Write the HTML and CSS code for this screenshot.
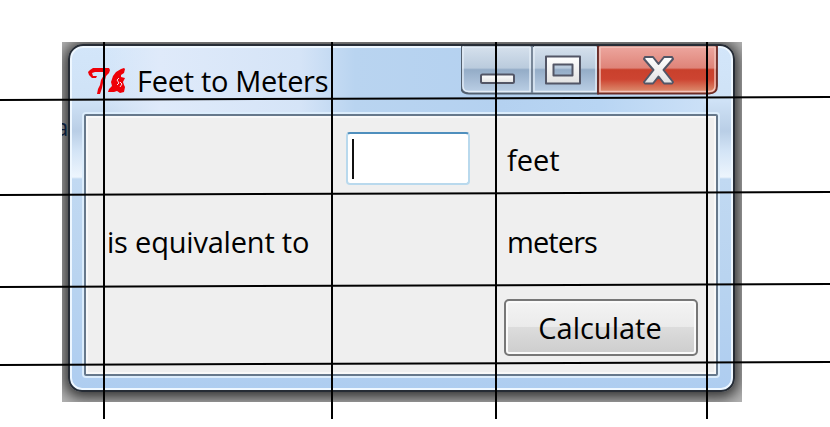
FILE: index.html
```html
<!DOCTYPE html>
<html lang="en">
<head>
<meta charset="utf-8">
<title>Feet to Meters</title>
<link rel="stylesheet" href="styles.css">
</head>
<body>
<main class="desktop">
  <span class="behind">a</span>
  <section class="window">
    <header class="titlebar">
      <svg class="logo" width="38" height="28" viewBox="0 0 38 28" fill="#ee0008">
        <path d="M1 7L0 4 2 2 5 0H21L22 2 21 5 18 8 17 12 15 15 14 20 12 26H9L10 21 12 17 13 12 16 7 15 4H7L4 5 5 8 9 8 8 10 4 10z"/>
        <path d="M36 0L37 1 36 5 33 7 33 9 37 10 35 14 36 17 37 19 36 24 32 25 29 23 26 24 20 24 21 21 24 18 23 14 25 8 28 4 33 1z"/>
        <path fill="none" stroke="#f6e3ec" d="M31 10L29 12 31 15 29 17M32 14L34 16 32 19"/>
      </svg>
      <h1 class="title">Feet to Meters</h1>
      <div class="controls">
        <svg width="257" height="50" viewBox="0 0 257 50">
          <defs>
            <linearGradient id="blue" x2="0" y2="1"><stop offset="0" stop-color="#d6e1ed"/><stop offset=".46" stop-color="#bacbdd"/><stop offset=".5" stop-color="#94acc7"/><stop offset="1" stop-color="#bdd1e7"/></linearGradient>
            <linearGradient id="red" x2="0" y2="1"><stop offset="0" stop-color="#eda79f"/><stop offset=".46" stop-color="#df8479"/><stop offset=".5" stop-color="#c9402c"/><stop offset=".7" stop-color="#cd4431"/><stop offset="1" stop-color="#df9878"/></linearGradient>
            <linearGradient id="glyph" x2="0" y2="1"><stop offset="0" stop-color="#fff"/><stop offset="1" stop-color="#e2e2e2"/></linearGradient>
          </defs>
          <path d="M0 0V40Q0 47.500 8 47.500H137V0z" fill="url(#blue)" stroke="#53606f" stroke-width="2"/>
          <path d="M137 0V47.500H248Q256 47.500 256 40V0z" fill="url(#red)" stroke="#6c2b26" stroke-width="1.800"/>
          <path d="M2 0V40Q2 45.500 8 45.500H69V1H2M73 1V45.500H135V1H73" fill="none" stroke="#e5eef7" stroke-width="1.300"/>
          <path d="M139 1V45.500H248Q254 45.500 254 40V1z" fill="none" stroke="#f3c3ba" stroke-width="1.400"/>
          <path d="M71 0V47" stroke="#717f91" stroke-width="1.800"/>
          <rect x="20" y="28.500" width="33" height="8.500" rx="1.500" fill="url(#glyph)" stroke="#535666" stroke-width="2"/>
          <path d="M85 10.500h34v27h-34zM92.500 18.500v11h19v-11z" fill="url(#glyph)" fill-rule="evenodd" stroke="#535666" stroke-width="2" stroke-linejoin="round"/>
          <path d="M184 11h8l5.500 7 5.500-7h8l1 2-9.500 11 9.500 12-1 1.500h-8l-5.500-7-5.500 7h-8l-1-1.500 9.500-12-9.500-11z" fill="url(#glyph)" stroke="#535666" stroke-width="2" stroke-linejoin="round"/>
        </svg>
      </div>
    </header>
    <div class="client">
      <div class="cell"></div>
      <div class="cell"><div class="entry"><i class="caret"></i></div></div>
      <div class="cell label feet">feet</div>
      <div class="cell label first">is equivalent to</div>
      <div class="cell"></div>
      <div class="cell label meters">meters</div>
      <div class="cell"></div>
      <div class="cell"></div>
      <div class="cell"><button class="calculate">Calculate</button></div>
    </div>
  </section>
</main>
<svg class="guides" width="830" height="427" viewBox="0 0 830 427" stroke="#000" stroke-width="2">
  <path d="M0 100L830 97M0 195L830 192M0 287L830 284M0 365L830 362"/>
  <path d="M104 42V419M332 42V419M496 42V419M707 42V419"/>
</svg>
</body>
</html>
```
FILE: styles.css
```css
* { box-sizing: border-box; }
body {
  margin: 0;
  background: #fff;
  color: #000;
  font-family: "Open Sans", "Noto Sans", sans-serif;
  font-size: 29px;
  overflow: hidden;
}
.desktop {
  position: relative;
  width: 680px;
  height: 360px;
  margin: 42px 0 0 62px;
  padding: 2px 7px 10px 6px;
  overflow: hidden;
  background: #b4b4b4;
}
.behind {
  position: absolute;
  z-index: 1;
  left: -7px;
  top: 68px;
  width: 13px;
  overflow: hidden;
  font-size: 24px;
  color: #0b1c38;
}
.window {
  position: relative;
  width: 667px;
  height: 348px;
  border: 2px solid #262c35;
  border-radius: 15px 15px 14px 14px;
  padding: 0 14px 14px;
  background:
    linear-gradient(#d3e6fa, #cfe2f6 55px, #b9cee6 85px, #d3e4f6 105px, #edf5fd 131px, #c1d9f2 133px, #b9d4f0 230px, #aecdf0);
  box-shadow: inset 0 0 0 2px #eef7ff, 0 2px 14px 4px #333;
}
.window::before {
  content: "";
  position: absolute;
  inset: 2px 30px auto 30px;
  height: 67px;
  background: linear-gradient(90deg, #d3e6fa00, #dfeafa 60px, #d5e4f7 200px, #b9d4f0 255px, #b4d1f0 400px, #b8d5f3 500px, #cbe0f7);
}
.titlebar {
  position: relative;
  display: flex;
  height: 68px;
  padding-left: 4px;
}
.logo { margin-top: 22px; }
.title {
  margin: 14px 0 0 11px;
  font-size: 29px;
  line-height: 42px;
  font-weight: 400;
  letter-spacing: -.3px;
  white-space: nowrap;
}
.controls { height: 50px; margin: 0 1px 0 auto; }
.controls svg { display: block; }
.client {
  position: relative;
  display: grid;
  grid-template-columns: 246px 164px 1fr;
  grid-template-rows: 80px 92px 1fr;
  width: 634px;
  height: 262px;
  border: 2px solid #66788b;
  border-radius: 2px;
  background: #efefef;
  box-shadow: 0 0 0 2px #dcedfc, inset 0 0 0 2px #f8f8f8;
}
.cell { min-width: 0; }
.label {
  padding-left: 11px;
  line-height: 92px;
  white-space: nowrap;
}
.feet { line-height: 87px; }
.first { padding-left: 21px; letter-spacing: -.2px; }
.meters { letter-spacing: -.9px; }
.entry {
  width: 124px;
  height: 53px;
  margin: 16px 0 0 14px;
  padding: 5px 0 0 4px;
  border: 2px solid #b9d9ed;
  border-top-color: #4f8fbd;
  border-radius: 4px;
  background: #fff;
}
.caret { display: block; width: 2px; height: 40px; background: #111; }
.calculate {
  display: block;
  width: 194px;
  height: 57px;
  margin: 11px 0 0 8px;
  padding: 1px 2px 0 0;
  border: 2px solid #777;
  border-radius: 5px;
  background: linear-gradient(#f3f3f3, #ebebeb 48%, #dcdcdc 50%, #cdcdcd);
  box-shadow: inset 0 0 0 2px #fafafa;
  font: inherit;
  color: #000;
  line-height: 52px;
}
.guides { position: absolute; left: 0; top: 0; }
```
